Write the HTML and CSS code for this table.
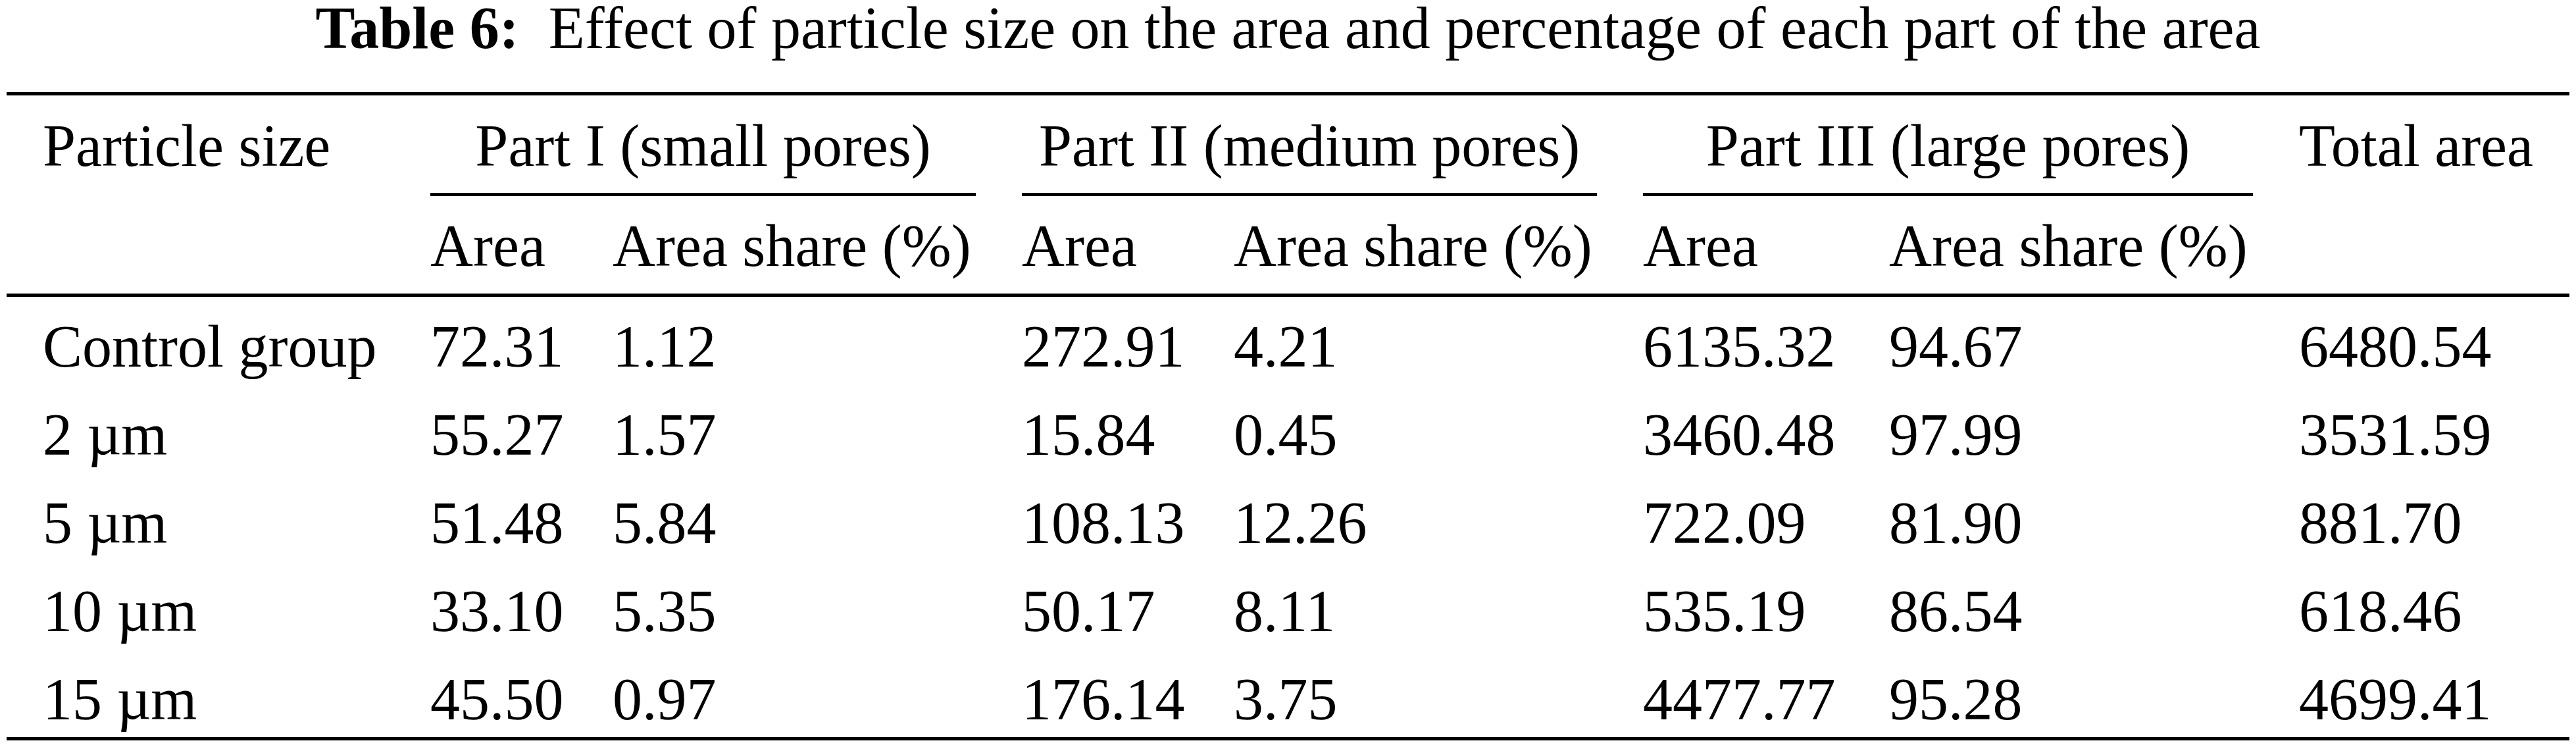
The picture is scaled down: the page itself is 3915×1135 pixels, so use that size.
FILE: index.html
```html
<!DOCTYPE html>
<html lang="en">
<head>
    <meta charset="UTF-8">
    <meta name="viewport" content="width=device-width, initial-scale=1.0">
    <title>Table 6</title>
    <link rel="stylesheet" href="styles.css">
</head>
<body>
    <h1 class="caption"><b>Table 6:</b>&nbsp; Effect of particle size on the area and percentage of each part of the area</h1>
    <table class="data">
        <colgroup>
            <col class="c-lead">
            <col class="c-area">
            <col class="c-share">
            <col class="c-area2">
            <col class="c-share">
            <col class="c-area3">
            <col class="c-share3">
            <col class="c-total">
        </colgroup>
        <thead>
            <tr>
                <th class="lead span" rowspan="2">Particle size</th>
                <th class="group" colspan="2"><div>Part I (small pores)</div></th>
                <th class="group" colspan="2"><div>Part II (medium pores)</div></th>
                <th class="group" colspan="2"><div>Part III (large pores)</div></th>
                <th class="span" rowspan="2">Total area</th>
            </tr>
            <tr class="sub">
                <th>Area</th>
                <th>Area share (%)</th>
                <th>Area</th>
                <th>Area share (%)</th>
                <th>Area</th>
                <th>Area share (%)</th>
            </tr>
        </thead>
        <tbody>
            <tr>
                <td class="lead">Control group</td>
                <td>72.31</td><td>1.12</td>
                <td>272.91</td><td>4.21</td>
                <td>6135.32</td><td>94.67</td>
                <td>6480.54</td>
            </tr>
            <tr>
                <td class="lead">2 µm</td>
                <td>55.27</td><td>1.57</td>
                <td>15.84</td><td>0.45</td>
                <td>3460.48</td><td>97.99</td>
                <td>3531.59</td>
            </tr>
            <tr>
                <td class="lead">5 µm</td>
                <td>51.48</td><td>5.84</td>
                <td>108.13</td><td>12.26</td>
                <td>722.09</td><td>81.90</td>
                <td>881.70</td>
            </tr>
            <tr>
                <td class="lead">10 µm</td>
                <td>33.10</td><td>5.35</td>
                <td>50.17</td><td>8.11</td>
                <td>535.19</td><td>86.54</td>
                <td>618.46</td>
            </tr>
            <tr>
                <td class="lead">15 µm</td>
                <td>45.50</td><td>0.97</td>
                <td>176.14</td><td>3.75</td>
                <td>4477.77</td><td>95.28</td>
                <td>4699.41</td>
            </tr>
        </tbody>
    </table>
</body>
</html>
```

FILE: styles.css
```css
body {
    margin: 0;
    background: #fff;
    color: #000;
    font-family: "Liberation Serif", "Times New Roman", serif;
    font-size: 90px;
}
.caption {
    margin: 0 0 55px;
    font-size: 90px;
    font-weight: normal;
    line-height: 85px;
    text-align: center;
    white-space: nowrap;
}
.caption b {
    font-weight: bold;
}
.data {
    margin-left: 10px;
    width: 3895px;
    table-layout: fixed;
    border-collapse: separate;
    border-spacing: 0;
    border-top: 5px solid #000;
    border-bottom: 5px solid #000;
    line-height: 90px;
    white-space: nowrap;
}
.c-lead { width: 644px; }
.c-area { width: 277px; }
.c-share { width: 622px; }
.c-area2 { width: 322px; }
.c-area3 { width: 374px; }
.c-share3 { width: 623px; }
.c-total { width: 411px; }

th, td {
    padding: 0;
    text-align: left;
    font-weight: normal;
    vertical-align: top;
}
.lead {
    padding-left: 55px;
}
.span {
    padding-top: 32px;
    border-bottom: 5px solid #000;
}
.group {
    padding-right: 70px;
}
.group div {
    padding: 32px 0 26px;
    border-bottom: 5px solid #000;
    text-align: center;
}
.sub th {
    padding-top: 31px;
    padding-bottom: 27px;
    border-bottom: 5px solid #000;
}
td {
    padding-top: 44px;
}
tbody tr:first-child td {
    padding-top: 31px;
}
tbody tr:last-child td {
    padding-bottom: 12px;
}
```
